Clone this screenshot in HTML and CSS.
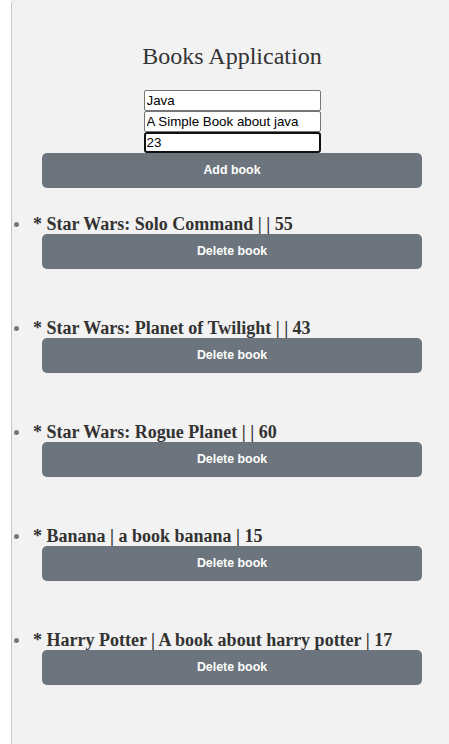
FILE: index.html
```html
<!DOCTYPE html>
<html>
<head>
<meta charset="utf-8">
<link rel="stylesheet" href="styles.css">
</head>
<body>
<div class="app">
  <h2 class="title">Books Application</h2>
  <form class="form">
    <input class="field" type="text" value="Java">
    <input class="field" type="text" value="A Simple Book about java">
    <input class="field focused" type="text" value="23">
    <button class="btn add" type="button">Add book</button>
  </form>
  <ul class="books">
    <li class="book"><span class="book-text">* Star Wars: Solo Command | | 55</span><button class="btn del" type="button">Delete book</button></li>
    <li class="book"><span class="book-text">* Star Wars: Planet of Twilight | | 43</span><button class="btn del" type="button">Delete book</button></li>
    <li class="book"><span class="book-text">* Star Wars: Rogue Planet | | 60</span><button class="btn del" type="button">Delete book</button></li>
    <li class="book"><span class="book-text">* Banana | a book banana | 15</span><button class="btn del" type="button">Delete book</button></li>
    <li class="book"><span class="book-text">* Harry Potter | A book about harry potter | 17</span><button class="btn del" type="button">Delete book</button></li>
  </ul>
</div>
</body>
</html>
```
FILE: styles.css
```css
html, body {
  margin: 0;
  padding: 0;
  background: #ffffff;
  overflow: hidden;
}
.app {
  margin-left: 11px;
  border-left: 1px solid #c9c9c9;
  border-top-left-radius: 4px;
  background: #f2f2f2;
  min-height: 744px;
  padding: 23px 0 0 3px;
  box-sizing: border-box;
  font-family: "Liberation Serif", serif;
  color: #333333;
}
.title {
  margin: 20px 0 20px 0;
  font-size: 24px;
  font-weight: normal;
  text-align: center;
  line-height: 26.6px;
}
.form {
  display: flex;
  flex-direction: column;
  align-items: center;
  margin: 0;
}
.field {
  box-sizing: border-box;
  width: 177px;
  height: 21px;
  margin: 0;
  padding: 1px 2px;
  border: 1px solid #767676;
  border-radius: 2px;
  background: #ffffff;
  font-family: "Liberation Sans", Arial, sans-serif;
  font-size: 13.33px;
  color: #000000;
}
.field.focused {
  border: 2px solid #101010;
  border-radius: 3px;
  padding: 0 1px;
  outline: none;
}
.btn {
  display: block;
  box-sizing: border-box;
  width: 380px;
  height: 35px;
  border: none;
  border-radius: 5px;
  background: #6c757d;
  color: #ffffff;
  font-family: "Liberation Sans", Arial, sans-serif;
  font-size: 12.4px;
  font-weight: bold;
  padding: 0;
}
.books {
  margin: 26px 0 0 0;
  padding-left: 18px;
  list-style: none;
}
.book {
  position: relative;
  color: #333333;
  font-size: 18px;
  font-weight: bold;
  line-height: 20px;
  margin-bottom: 49px;
}
.book::before {
  content: "";
  position: absolute;
  left: -19px;
  top: 8px;
  width: 5px;
  height: 5px;
  border-radius: 50%;
  background: #777777;
}
.btn.del {
  margin-left: 9px;
}
```
